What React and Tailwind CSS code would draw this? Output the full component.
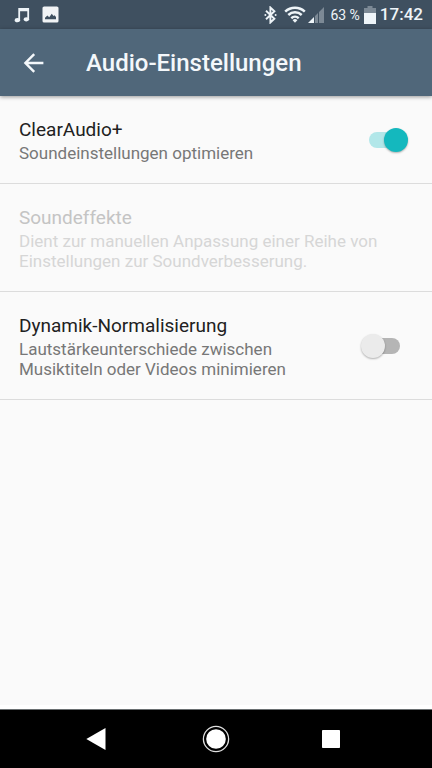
import React, { useState } from 'react';

const StatusBar = () => (
    <div className="flex h-[29px] items-center bg-[#3f5060] pl-[14px] pr-[9px] text-[#eef4f8]">
        <svg viewBox="0 0 16 16" className="h-4 w-4" fill="none" stroke="currentColor" aria-label="Musik">
            <path d="M5.2 13V1.8h9V12M5.2 3.4h9" strokeWidth="1.8" />
            <ellipse cx="3.4" cy="13.2" rx="2.7" ry="2.1" fill="currentColor" stroke="none" />
            <ellipse cx="12.4" cy="12.3" rx="2.7" ry="2.1" fill="currentColor" stroke="none" />
        </svg>
        <svg viewBox="0 0 17 17" className="ml-3 h-[17px] w-[17px]" aria-label="Bild">
            <rect x="0.5" y="0.5" width="16" height="16" rx="1.6" fill="#f1f3f5" />
            <path d="M3 13.2v-1.4l2.4-2.4 1.8 1.8 2.6-3.4 1.7 2.3 1-.9L14 11v2.2z" fill="#3f5060" />
        </svg>

        <div className="ml-auto flex items-center">
            <svg viewBox="0 0 13 18" className="h-[18px] w-[13px]" fill="none" stroke="currentColor" strokeWidth="1.9" aria-label="Bluetooth">
                <path d="M2 4.8l8.4 8-4 3.7V1.5l4 3.7-8.4 8" />
                <circle cx="1.4" cy="9" r="1" fill="currentColor" stroke="none" />
                <circle cx="11.6" cy="9" r="1" fill="currentColor" stroke="none" />
            </svg>
            <svg viewBox="0 0 22 17" className="ml-[7px] h-[17px] w-[22px]" fill="none" stroke="currentColor" strokeWidth="2.5" aria-label="WLAN">
                <path d="M1.2 5.6a14.4 14.4 0 0 1 19.6 0M4.3 9a9.8 9.8 0 0 1 13.4 0M7.3 12.2a5.6 5.6 0 0 1 7.4 0" />
                <path d="M11 16.8l-2.4-2.6a3.4 3.4 0 0 1 4.8 0z" fill="currentColor" stroke="none" />
            </svg>
            <svg viewBox="0 0 16 16" className="ml-[2px] h-4 w-4" fill="currentColor" aria-label="Mobilfunk">
                <path d="M0 16l6-6v6z" />
                <path d="M7 16V9l3-3v10zM11 16V5l5-5v16z" opacity="0.35" />
            </svg>
            <span className="ml-[6px] text-sm">63 %</span>
            <svg viewBox="0 0 12 18" className="ml-1 h-[18px] w-3" fill="currentColor" aria-label="Akku">
                <path d="M3.5 0h5v2H12v5H0V2h3.5z" opacity="0.35" />
                <path d="M0 7h12v11H0z" />
            </svg>
            <span className="ml-1 text-[17px] font-medium">17:42</span>
        </div>
    </div>
);

const Header = () => (
    <header className="relative flex h-[67px] items-center bg-[#50677a] pl-[22px] text-[#f4f8fb] shadow-[0_1px_4px_rgba(0,0,0,0.4)]">
        <button type="button" aria-label="Zurück" className="h-6 w-6">
            <svg viewBox="0 0 24 24" className="h-6 w-6" fill="none" stroke="currentColor" strokeWidth="2.4">
                <path d="M21.4 12H3.8M12.2 3.2L3.4 12l8.8 8.8" />
            </svg>
        </button>
        <h1 className="ml-10 text-2xl font-medium">Audio-Einstellungen</h1>
    </header>
);

const Switch = ({ id, checked, onChange }) => (
    <input
        id={id}
        type="checkbox"
        role="switch"
        checked={checked}
        onChange={(e) => onChange(e.target.checked)}
        className="relative h-6 w-[47px] shrink-0 cursor-pointer appearance-none before:absolute before:inset-x-2 before:inset-y-1 before:rounded-full before:bg-[#b5b5b5] after:absolute after:left-0 after:top-0 after:h-6 after:w-6 after:rounded-full after:bg-[#ebebeb] after:shadow-[0_1px_2px_rgba(0,0,0,0.3)] checked:before:bg-[#b2e7e9] checked:after:left-[23px] checked:after:bg-[#14b8be]"
    />
);

const SettingRow = ({ id, title, summary, disabled, children }) => (
    <li className="flex items-center justify-between gap-8 border-b border-[#dcdcdc] py-5 pl-[19px] pr-6">
        <label htmlFor={id} className={disabled ? 'text-[#c4c4c4]' : 'text-[#212121]'}>
            <span className="block text-[19px] leading-[27px]">{title}</span>
            <span className={`block text-[17px] leading-5 ${disabled ? 'text-[#d6d6d6]' : 'text-[#777777]'}`}>
                {summary}
            </span>
        </label>
        {children}
    </li>
);

const NavBar = () => (
    <nav className="grid h-[59px] grid-cols-[1fr_auto_1fr] items-center border-t border-[#6b7072] bg-black text-white">
        <button type="button" aria-label="Zurück" className="mr-24 justify-self-end">
            <svg viewBox="0 0 20 24" className="h-6 w-5" fill="currentColor">
                <path d="M0.3 12L19.5 1v22z" />
            </svg>
        </button>
        <button type="button" aria-label="Startbildschirm">
            <svg viewBox="0 0 28 28" className="h-7 w-7">
                <circle cx="14" cy="14" r="12.6" fill="none" stroke="#e0e0e0" strokeWidth="1.3" />
                <circle cx="14" cy="14" r="9.8" fill="currentColor" />
            </svg>
        </button>
        <button type="button" aria-label="Übersicht" className="ml-[92px] justify-self-start">
            <svg viewBox="0 0 18 18" className="h-[18px] w-[18px]" fill="currentColor">
                <rect width="18" height="18" rx="0.8" />
            </svg>
        </button>
    </nav>
);

const App = () => {
    const [clearAudio, setClearAudio] = useState(true);
    const [normalizer, setNormalizer] = useState(false);

    return (
        <div className="flex min-h-screen flex-col bg-[#fafafa] font-['Roboto',sans-serif]">
            <StatusBar />
            <Header />
            <main className="flex-1">
                <ul>
                    <SettingRow id="clear-audio" title="ClearAudio+" summary="Soundeinstellungen optimieren">
                        <Switch id="clear-audio" checked={clearAudio} onChange={setClearAudio} />
                    </SettingRow>
                    <SettingRow
                        title="Soundeffekte"
                        summary="Dient zur manuellen Anpassung einer Reihe von Einstellungen zur Soundverbesserung."
                        disabled
                    />
                    <SettingRow
                        id="normalizer"
                        title="Dynamik-Normalisierung"
                        summary="Lautstärkeunterschiede zwischen Musiktiteln oder Videos minimieren"
                    >
                        <Switch id="normalizer" checked={normalizer} onChange={setNormalizer} />
                    </SettingRow>
                </ul>
            </main>
            <div className="h-1 bg-white" />
            <NavBar />
        </div>
    );
};

export default App;
